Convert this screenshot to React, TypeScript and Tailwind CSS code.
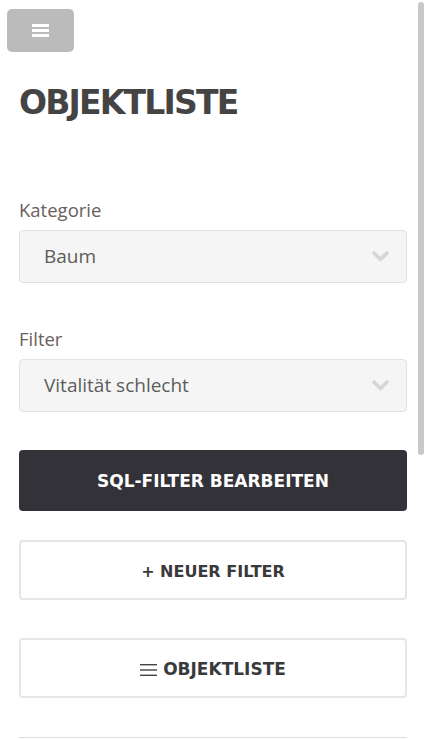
import React from 'react';

const heading = { fontFamily: '"DejaVu Sans", "Liberation Sans", sans-serif' };
const body = { fontFamily: '"Open Sans", Lato, sans-serif' };

const Chevron = () => (
  <svg width="17" height="11" viewBox="0 0 17 11">
    <polyline points="2,2 8.5,8.5 15,2" fill="none" stroke="#d6d6d6" strokeWidth="3.6" strokeLinecap="round" strokeLinejoin="round" />
  </svg>
);

const SelectBox: React.FC<{ label: string; value: string }> = ({ label, value }) => (
  <div className="flex flex-col">
    <label className="text-[18.5px] leading-[22px] text-[#6b605a] mb-[9px]" style={body}>
      {label}
    </label>
    <div className="h-[53px] rounded-[4px] border border-[#e2e2e2] bg-[#f5f5f5] flex items-center justify-between pl-[24px] pr-[17px]">
      <span className="text-[19px] text-[#5c5c5c]" style={body}>{value}</span>
      <Chevron />
    </div>
  </div>
);

const ListIcon = () => (
  <svg width="17" height="14" viewBox="0 0 17 14" className="mr-[6px]">
    <rect x="0" y="1" width="17" height="1.4" fill="#444" />
    <rect x="0" y="6.3" width="17" height="1.4" fill="#444" />
    <rect x="0" y="11.6" width="17" height="1.4" fill="#444" />
  </svg>
);

export default function App() {
  return (
    <div className="relative w-full min-h-[1200px] bg-white">
      {/* overlay scrollbar thumb */}
      <div className="fixed right-[1px] top-[2px] w-[6px] h-[453px] rounded-[3px] bg-[#c8c8c8]" />

      <div className="pt-[9px] pl-[7px]">
        <button className="w-[67px] h-[43px] rounded-[5px] bg-[#bbbbbb] flex items-center justify-center">
          <svg width="17" height="13" viewBox="0 0 17 13">
            <rect x="0" y="0" width="17" height="3" fill="#fff" />
            <rect x="0" y="5" width="17" height="3" fill="#fff" />
            <rect x="0" y="10" width="17" height="3" fill="#fff" />
          </svg>
        </button>
      </div>

      <div className="pl-[19px] pr-[18px]">
        <h1 className="mt-[31px] text-[33px] leading-[40px] font-bold text-[#444444] tracking-[-1.8px]" style={heading}>
          OBJEKTLISTE
        </h1>

        <div className="mt-[76px] flex flex-col gap-[45px]">
          <SelectBox label="Kategorie" value="Baum" />
          <SelectBox label="Filter" value="Vitalität schlecht" />
        </div>

        <button
          className="mt-[38px] w-full h-[61px] pt-[3px] rounded-[4px] bg-[#333238] text-white text-[17px] font-bold flex items-center justify-center"
          style={heading}
        >
          SQL-FILTER BEARBEITEN
        </button>

        <button
          className="mt-[29px] w-full h-[60px] pt-[3px] rounded-[4px] border-2 border-[#e6e6e6] bg-white text-[#3a3a3a] text-[16px] font-bold flex items-center justify-center"
          style={heading}
        >
          + NEUER FILTER
        </button>

        <button
          className="mt-[38px] w-full h-[60px] pt-[3px] rounded-[4px] border-2 border-[#e6e6e6] bg-white text-[#3a3a3a] text-[17px] font-bold flex items-center justify-center"
          style={heading}
        >
          <ListIcon />
          OBJEKTLISTE
        </button>

        <hr className="mt-[39px] border-0 border-t border-[#dddddd]" />
      </div>
    </div>
  );
}
